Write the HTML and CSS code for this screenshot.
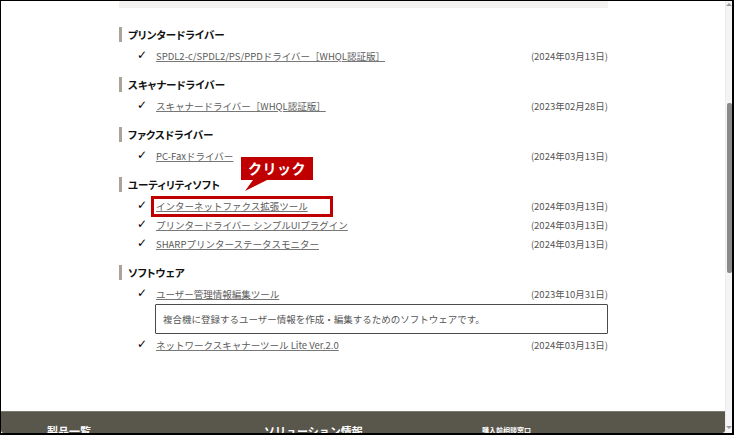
FILE: index.html
```html
<html><head><meta charset="UTF-8"><meta name="viewport" content="width=device-width, initial-scale=1.0"><title>ダウンロード</title>
<link rel="stylesheet" href="styles.css">
</head>
<body>
<div class="frame">
    <div class="screen">
        <div class="page">
            <main class="main">
                <div class="band"></div>

                <section class="group">
                    <h2 class="group-title">プリンタードライバー</h2>
                    <ul class="files">
                        <li class="file"><span class="check">✓</span><a class="file-link" href="#">SPDL2-c/SPDL2/PS/PPDドライバー［WHQL認証版］</a><span class="file-date">(2024年03月13日)</span></li>
                    </ul>
                </section>

                <section class="group">
                    <h2 class="group-title">スキャナードライバー</h2>
                    <ul class="files">
                        <li class="file"><span class="check">✓</span><a class="file-link" href="#">スキャナードライバー［WHQL認証版］</a><span class="file-date">(2023年02月28日)</span></li>
                    </ul>
                </section>

                <section class="group">
                    <h2 class="group-title">ファクスドライバー</h2>
                    <ul class="files">
                        <li class="file"><span class="check">✓</span><a class="file-link" href="#">PC-Faxドライバー</a><span class="file-date">(2024年03月13日)</span></li>
                    </ul>
                </section>

                <section class="group">
                    <h2 class="group-title">ユーティリティソフト</h2>
                    <ul class="files">
                        <li class="file"><span class="check">✓</span><a class="file-link" href="#">インターネットファクス拡張ツール</a><span class="file-date">(2024年03月13日)</span></li>
                        <li class="file"><span class="check">✓</span><a class="file-link" href="#">プリンタードライバー シンプルUIプラグイン</a><span class="file-date">(2024年03月13日)</span></li>
                        <li class="file"><span class="check">✓</span><a class="file-link" href="#">SHARPプリンターステータスモニター</a><span class="file-date">(2024年03月13日)</span></li>
                    </ul>
                </section>

                <section class="group">
                    <h2 class="group-title">ソフトウェア</h2>
                    <ul class="files">
                        <li class="file"><span class="check">✓</span><a class="file-link" href="#">ユーザー管理情報編集ツール</a><span class="file-date">(2023年10月31日)</span></li>
                        <li class="file-note">複合機に登録するユーザー情報を作成・編集するためのソフトウェアです。</li>
                        <li class="file"><span class="check">✓</span><a class="file-link" href="#">ネットワークスキャナーツール Lite Ver.2.0</a><span class="file-date">(2024年03月13日)</span></li>
                    </ul>
                </section>
            </main>

            <footer class="footer">
                <div class="footer-col">製品一覧</div>
                <div class="footer-col">ソリューション情報</div>
                <div class="footer-col small">購入前相談窓口</div>
            </footer>
        </div>

        <div class="scrollbar">
            <span class="arrow-up"></span>
            <span class="thumb"></span>
            <span class="arrow-down"></span>
        </div>
    </div>

    <!-- annotation -->
    <div class="callout">クリック</div>
    <div class="highlight"></div>
</div>
</body></html>
```

FILE: styles.css
```css
body {
    margin: 0;
    font-family: 'Noto Sans CJK JP', 'Noto Sans', sans-serif;
    background-color: #ffffff;
}

.frame {
    position: relative;
    width: 734px;
    height: 435px;
    box-sizing: border-box;
    border-top: 1px solid #000;
    border-left: 1px solid #000;
    border-right: 2px solid #000;
    border-bottom: 2px solid #000;
    overflow: hidden;
}

.screen {
    display: flex;
    height: 100%;
}

.page {
    flex: 1;
    display: flex;
    flex-direction: column;
}

.main {
    flex: 1;
}

.band {
    width: 489px;
    height: 7px;
    margin-left: 118px;
    background-color: #f4f2f1;
}

.group {
    width: 489px;
    margin-left: 118px;
    margin-top: 12px;
}

.band + .group {
    margin-top: 19px;
}

.group-title {
    margin: 0;
    height: 15px;
    line-height: 15px;
    font-size: 10.5px;
    font-weight: bold;
    font-feature-settings: "palt";
    color: #111;
    border-left: 3px solid #a8a598;
    padding-left: 6px;
}

.files {
    list-style: none;
    margin: 4px 0 0 0;
    padding: 0 0 0 18px;
}

.file {
    display: flex;
    align-items: center;
    height: 19px;
    font-size: 9.5px;
}

.check {
    width: 19px;
    font-family: 'DejaVu Sans', sans-serif;
    font-weight: bold;
    font-size: 12px;
    line-height: 19px;
    color: #000;
}

.file-link {
    color: #5b5b5b;
    text-decoration: underline;
    text-decoration-color: #777;
}

.file-date {
    margin-left: auto;
    color: #555;
}

.file-note {
    margin: 1px 0 1px 18px;
    height: 30px;
    box-sizing: border-box;
    border: 1px solid #4a4a4a;
    border-radius: 1px;
    padding: 0 7px;
    line-height: 28px;
    font-size: 9.5px;
    color: #555;
}

.footer {
    height: 22px;
    box-sizing: border-box;
    padding: 11px 0 0 46px;
    display: grid;
    grid-template-columns: 217px 218px auto;
    align-items: start;
    background-color: #59564b;
    border-top: 1px solid #7c796e;
    border-radius: 0 0 3px 3px;
    overflow: hidden;
    color: #fff;
    font-size: 11px;
    font-weight: bold;
    line-height: 16px;
}

.footer-col.small {
    font-size: 7px;
    line-height: 14px;
}

.scrollbar {
    width: 6px;
    display: flex;
    flex-direction: column;
    align-items: center;
    background-color: #f4f4f4;
    border-left: 1px solid #ececec;
}

.arrow-up {
    margin-top: 2px;
    border-left: 3px solid transparent;
    border-right: 3px solid transparent;
    border-bottom: 3px solid #9a9a9a;
}

.thumb {
    margin-top: 97px;
    width: 5px;
    height: 170px;
    border-radius: 2px;
    background-color: #8a8a8a;
}

.arrow-down {
    margin-top: auto;
    margin-bottom: 4px;
    border-left: 3px solid transparent;
    border-right: 3px solid transparent;
    border-top: 3px solid #9a9a9a;
}

.callout {
    position: absolute;
    left: 240px;
    top: 156px;
    width: 72px;
    height: 23px;
    background-color: #c00000;
    color: #fff;
    font-size: 14px;
    font-weight: bold;
    line-height: 23px;
    text-align: center;
    letter-spacing: 0.5px;
}

.callout::after {
    content: '';
    position: absolute;
    left: 4px;
    top: 23px;
    width: 22px;
    height: 11px;
    background-color: #c00000;
    clip-path: polygon(8px 0, 22px 0, 0 11px);
}

.highlight {
    position: absolute;
    left: 150px;
    top: 195px;
    width: 182px;
    height: 21px;
    box-sizing: border-box;
    border: 3px solid #c00000;
}
```
